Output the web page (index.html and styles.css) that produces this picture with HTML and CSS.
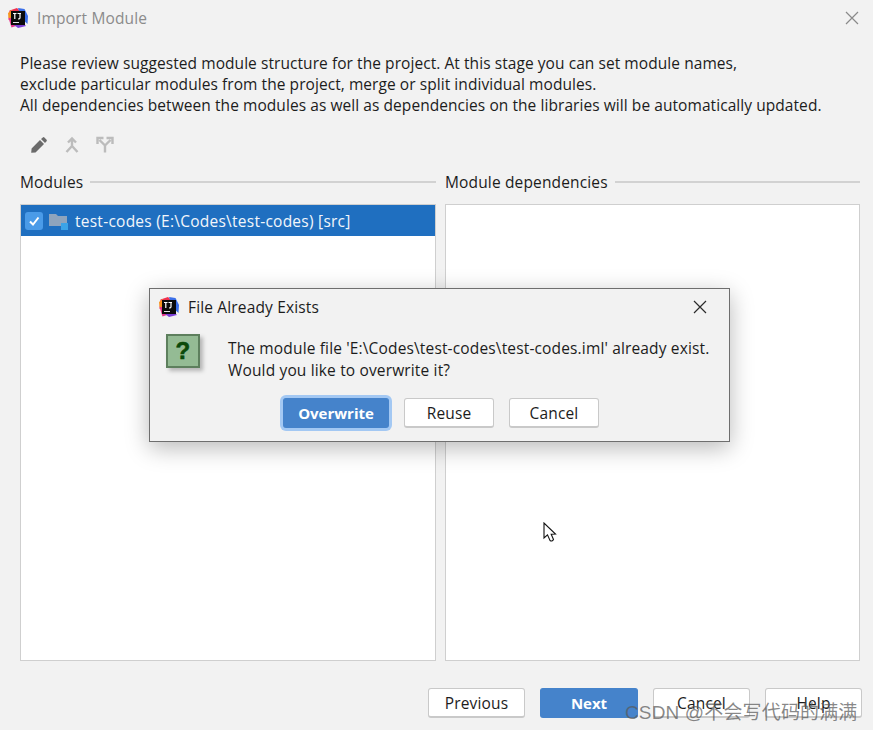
FILE: index.html
```html
<!DOCTYPE html>
<html lang="en">
<head>
<meta charset="utf-8">
<title>Import Module</title>
<link rel="stylesheet" href="styles.css">
</head>
<body>
<svg class="defs" width="0" height="0" aria-hidden="true">
  <defs>
    <symbol id="ij" viewBox="0 0 20 20">
      <path d="M1.5 2.5 L9 0 L12 3 L9 10 L0.5 12 Z" fill="#f0314f"/>
      <path d="M10 0 L16.5 1 L20 8 L19.5 16 L13 10 Z" fill="#3b6fe8"/>
      <path d="M0.5 10 L6 8 L8 18 L3.5 19.5 Z" fill="#e6358b"/>
      <path d="M6 17 L14 14 L18 18 L10 20 Z" fill="#7b3fd6"/>
      <path d="M0 5 L4 2 L4 10 L0.5 10 Z" fill="#f7931e"/>
      <rect x="3" y="3" width="14" height="14" fill="#0a0a0a"/>
      <rect x="5" y="14" width="6" height="1" fill="#e8e8e8"/>
      <path d="M5 5.5 H8.5 M6.8 5.5 V11 M9.5 5.5 H13 M12 5.5 V10 Q12 11 10 11" stroke="#fff" stroke-width="1.2" fill="none"/>
    </symbol>
  </defs>
</svg>
<div class="window">
  <header class="titlebar">
    <svg class="app-icon"><use href="#ij"/></svg>
    <span class="title">Import Module</span>
    <svg class="close close-muted" viewBox="0 0 14 14"><path d="M1 1 L13 13 M13 1 L1 13"/></svg>
  </header>
  <div class="intro">
    <p>Please review suggested module structure for the project. At this stage you can set module names,</p>
    <p>exclude particular modules from the project, merge or split individual modules.</p>
    <p>All dependencies between the modules as well as dependencies on the libraries will be automatically updated.</p>
  </div>
  <div class="toolbar">
    <svg class="tool" viewBox="0 0 18 18"><path d="M12.8 1.4 Q13.6 0.8 14.4 1.5 L16.6 3.7 Q17.2 4.5 16.6 5.3 L15 7 L11 3 Z M10 4 L14 8 L5.5 16.4 L1.2 16.8 L1.6 12.5 Z" fill="#6b6b6b"/></svg>
    <svg class="tool" viewBox="0 0 18 18"><path d="M9 2.5 L9 10 M5 6.5 L9 2.5 L13 6.5 M9 10 L3.5 16 M9 10 L14.5 16" fill="none" stroke="#bcbcbc" stroke-width="2.4"/></svg>
    <svg class="tool" viewBox="0 0 18 18"><path d="M9 16.5 L9 9.5 L3.5 4 M9 9.5 L14.5 4 M1.5 8 L1.5 2 L7.5 2 M10.5 2 L16.5 2 L16.5 8" fill="none" stroke="#bcbcbc" stroke-width="2.4"/></svg>
  </div>
  <div class="columns">
    <section class="column">
      <div class="group-label"><span>Modules</span><i class="rule"></i></div>
      <div class="panel">
        <div class="row">
          <span class="check"><svg viewBox="0 0 12 12"><path d="M2 6.5 L5 9.5 L10.5 2.5"/></svg></span>
          <svg class="folder" viewBox="0 0 20 18"><path d="M0 2 H7 L9 4 H18 V14 H0 Z" fill="#8ea4bd"/><rect x="12" y="11" width="7" height="7" fill="#3aa3e8"/></svg>
          <span class="row-text">test-codes (E:\Codes\test-codes) [src]</span>
        </div>
      </div>
    </section>
    <section class="column">
      <div class="group-label"><span>Module dependencies</span><i class="rule"></i></div>
      <div class="panel"></div>
    </section>
  </div>
  <footer class="footer">
    <button class="btn">Previous</button>
    <button class="btn primary">Next</button>
    <button class="btn">Cancel</button>
    <button class="btn">Help</button>
  </footer>
</div>

<div class="dialog">
  <header class="dialog-title">
    <svg class="app-icon"><use href="#ij"/></svg>
    <span>File Already Exists</span>
    <svg class="close" viewBox="0 0 14 14"><path d="M1 1 L13 13 M13 1 L1 13"/></svg>
  </header>
  <div class="dialog-body">
    <div class="question">?</div>
    <div class="message">
      <p>The module file 'E:\Codes\test-codes\test-codes.iml' already exist.</p>
      <p>Would you like to overwrite it?</p>
    </div>
  </div>
  <div class="dialog-actions">
    <button class="btn primary focused">Overwrite</button>
    <button class="btn">Reuse</button>
    <button class="btn">Cancel</button>
  </div>
</div>

<svg class="cursor" viewBox="0 0 14 21"><path d="M1 1 L1 16 L4.5 12.8 L7 18.5 Q9 20 10.5 17.5 L8.2 12.2 L12.5 12 Z" fill="#fff" stroke="#111" stroke-width="1.1"/></svg>
<div class="watermark">CSDN @不会写代码的满满</div>
</body>
</html>
```
FILE: styles.css
```css
* { box-sizing: border-box; }
html, body { margin: 0; height: 100%; }
body {
  background: #f2f2f2;
  color: #1c1c1c;
  font-family: "Open Sans", "Noto Sans CJK SC", sans-serif;
  font-size: 15.5px;
  letter-spacing: 0.15px;
  overflow: hidden;
}
p { margin: 0; }
.defs { position: absolute; }

.window { width: 873px; height: 730px; display: flex; flex-direction: column; padding: 0 11px 12px 20px; }

.titlebar { display: flex; align-items: center; height: 36px; margin-left: -12px; color: #8b8b8b; }
.app-icon { width: 20px; height: 20px; flex: none; }
.title { margin-left: 9px; }
.close { width: 14px; height: 14px; margin-left: auto; fill: none; stroke: #2b2b2b; stroke-width: 1.2; }
.close-muted { stroke: #8a8a8a; margin-right: 3px; }

.intro { margin-top: 17px; line-height: 21px; width: 842px; white-space: nowrap; letter-spacing: 0.065px; }

.toolbar { display: flex; gap: 15px; margin: 19px 0 0 10px; height: 20px; align-items: center; }
.tool { width: 18px; height: 18px; }

.columns { display: grid; grid-template-columns: 416px 415px; gap: 9px; flex: 1; margin-top: 17px; min-height: 0; }
.column { display: flex; flex-direction: column; min-height: 0; }
.group-label { display: flex; align-items: center; gap: 7px; height: 20px; margin-bottom: 12px; }
.rule { flex: 1; height: 2px; background: #d2d2d2; }
.panel { flex: 1; background: #fff; border: 1px solid #cfcfcf; }
.row { display: flex; align-items: center; height: 31px; background: #1f6fc0; color: #f2f6fb; }
.row-text { letter-spacing: 0.25px; }
.check { width: 18px; height: 18px; margin-left: 4px; border-radius: 3px; background: #4a9be8; display: flex; align-items: center; justify-content: center; }
.check svg { width: 12px; height: 12px; fill: none; stroke: #fff; stroke-width: 2; }
.folder { width: 20px; height: 18px; margin: 1px 6px 0 6px; }

.footer { display: flex; justify-content: flex-end; gap: 15px; margin-top: 27px; }
.footer .btn { width: 97px; }
.footer .btn.primary { width: 98px; }
.btn {
  height: 30px;
  width: 90px;
  padding: 0;
  font: inherit;
  letter-spacing: inherit;
  color: #1c1c1c;
  background: #fff;
  border: 1px solid #c9c9c9;
  border-bottom-width: 2px;
  border-radius: 3px;
}
.btn.primary { background: #4583cb; border-color: #4583cb; color: #fff; font-weight: 700; font-size: 15px; letter-spacing: 0; }
.btn.focused { width: 106px; box-shadow: 0 0 0 3px #a3c8f3; }

.dialog {
  position: absolute;
  left: 149px;
  top: 288px;
  width: 581px;
  height: 154px;
  background: #f2f2f2;
  border: 1px solid #6e6e6e;
  box-shadow: 0 6px 22px rgba(0, 0, 0, 0.28);
}
.dialog-title { display: flex; align-items: center; height: 36px; padding: 0 22px 0 9px; gap: 9px; }
.dialog-body { display: flex; }
.question {
  width: 34px;
  height: 34px;
  margin: 9px 0 0 16px;
  background: #94bb94;
  border: 2px solid #5d7f5d;
  box-shadow: 3px 3px 4px rgba(0, 0, 0, 0.25);
  color: #0a4a0a;
  font: 700 24px/30px "Liberation Sans", sans-serif;
  text-align: center;
  -webkit-text-stroke: 0.6px #0a4a0a;
}
.message { margin: 12px 0 0 28px; line-height: 22px; white-space: nowrap; }
.dialog-actions { display: flex; gap: 15px; margin: 17px 0 0 133px; }

.cursor { position: absolute; left: 543px; top: 522px; width: 14px; height: 21px; }
.watermark {
  position: absolute;
  left: 625px;
  top: 697px;
  font-family: "Liberation Sans", "Noto Sans CJK SC", sans-serif;
  font-size: 19px;
  letter-spacing: 0.15px;
  color: rgba(90, 90, 90, 0.72);
  white-space: nowrap;
}
```
